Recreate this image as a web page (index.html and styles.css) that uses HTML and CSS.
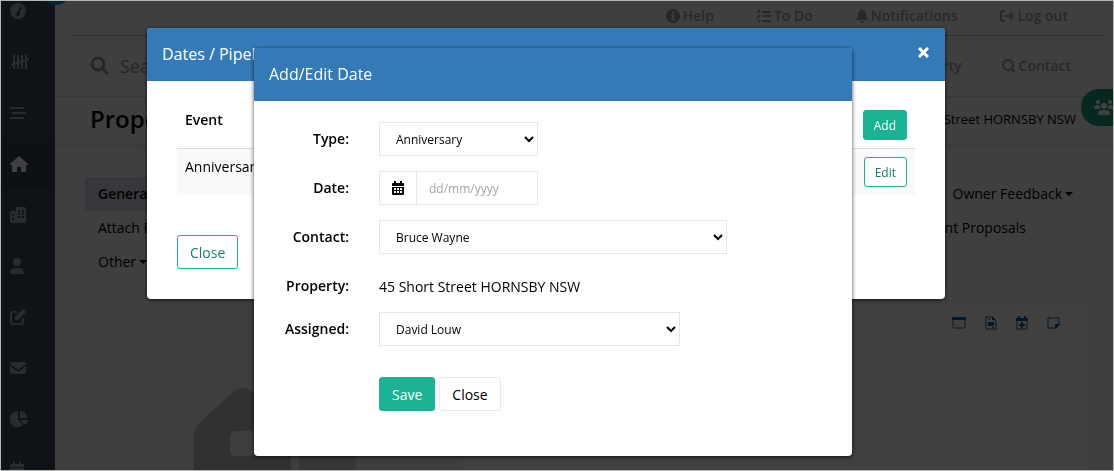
FILE: index.html
```
<!DOCTYPE html>
<html lang="en">
  <head>
    <meta charset="UTF-8" />
    <meta name="viewport" content="width=device-width, initial-scale=1.0" />
    <title>Property</title>
    <link rel="stylesheet" href="styles.css">
  </head>
  <body>
    <div class="page">
      <nav class="sidebar">
        <a href="#" aria-label="Dashboard"><svg width="16" height="16" viewBox="0 0 16 16"><circle cx="8" cy="8" r="8"/><path class="cut-line" d="M8 11l3-7"/><circle class="cut" cx="8" cy="11" r="2"/></svg></a>
        <a href="#" aria-label="Tally"><svg width="20" height="16" viewBox="0 0 20 16"><path class="line" d="M4 1v14M8 1v14M12 1v14M16 1v14M1 11L19 5"/></svg></a>
        <a href="#" aria-label="Lists"><svg width="16" height="14" viewBox="0 0 16 14"><path class="line" d="M0 2h14M2 7h14M0 12h14"/></svg></a>
        <a href="#" class="active" aria-label="Property"><svg width="18" height="16" viewBox="0 0 18 16"><path d="M9 0L0 8v1h2v6q0 1 1 1h4v-5h4v5h4q1 0 1-1V9h2V8z"/></svg></a>
        <a href="#" aria-label="Buildings"><svg width="16" height="16" viewBox="0 0 16 16"><path d="M8 0h6q2 0 2 2v12q0 2-2 2H2q-2 0-2-2V6q0-2 2-2h4V2q0-2 2-2z"/><path class="cut" d="M8 3h2v2H8zM12 3h2v2h-2zM8 6h2v2H8zM12 6h2v2h-2zM8 9h2v2H8zM12 9h2v2h-2zM2 7h2v2H2zM2 11h2v2H2z"/></svg></a>
        <a href="#" aria-label="People"><svg width="14" height="16" viewBox="0 0 14 16"><circle cx="7" cy="4" r="4"/><path d="M0 16q0-6 5-6h4q5 0 5 6z"/></svg></a>
        <a href="#" aria-label="Notes"><svg width="16" height="16" viewBox="0 0 16 16"><path class="line" d="M7 3H3Q1 3 1 5v8q0 2 2 2h8q2 0 2-2V9"/><path d="M5 11V8l6-6 3 3-6 6zM12 1q1-1 2 0l1 1q1 1 0 2l-1 1-3-3z"/></svg></a>
        <a href="#" aria-label="Mail"><svg width="16" height="12" viewBox="0 0 16 12"><path d="M2 0h12q2 0 2 2L8 8 0 2Q0 0 2 0zM0 4l8 6 8-6v6q0 2-2 2H2q-2 0-2-2z"/></svg></a>
        <a href="#" aria-label="Reports"><svg width="18" height="16" viewBox="0 0 18 16"><path d="M8 0v9l5 5A8 8 0 1 1 8 0zM10 0q6 0 7 7h-7zM10 9h8q0 3-3 5z"/></svg></a>
        <a href="#" aria-label="Calendar"><svg width="14" height="16" viewBox="0 0 14 16"><path d="M3 0h2v2h4V0h2v2h1q2 0 2 2v1H0V4q0-2 2-2h1zM0 6h14v8q0 2-2 2H2q-2 0-2-2z"/><path class="cut" d="M2 8h3v2H2zM6 8h2v2H6zM9 8h3v2H9zM2 12h3v2H2zM6 12h2v2H6zM9 12h3v2H9z"/></svg></a>
      </nav>
      <span class="collapse-dot"></span>

      <main class="main">
        <div class="top-links">
          <a href="#"><svg width="14" height="14" viewBox="0 0 14 14"><circle cx="7" cy="7" r="7"/><path class="hole" d="M6 3h2v2H6zM5 6h3v4h1v1H5v-1h1V7H5z"/></svg>Help</a>
          <a href="#"><svg width="14" height="14" viewBox="0 0 14 14"><path class="line" d="M5 3h9M6 7h8M5 12h9M0 2l1 1 2-2M0 7l1 1 2-2M1 12h2"/></svg>To Do</a>
          <a href="#"><svg width="12" height="14" viewBox="0 0 12 14"><path d="M5 0h2v1q3 1 3 4 0 4 2 5v1H0v-1q2-1 2-5 0-3 3-4zM4 12h4q0 2-2 2t-2-2z"/></svg>Notifications</a>
          <a href="#"><svg width="14" height="14" viewBox="0 0 14 14"><path class="line" d="M5 2H3Q1 2 1 4v6q0 2 2 2h2M5 7h8M10 4l3 3-3 3"/></svg>Log out</a>
        </div>

        <div class="search-row">
          <label class="search">
            <svg width="20" height="20" viewBox="0 0 20 20"><circle class="ring" cx="8" cy="8" r="6"/><path class="ring" d="M12 12l6 6"/></svg>
            <input type="text" placeholder="Search" aria-label="Search" />
          </label>
          <div class="search-links">
            <a href="#">Property</a>
            <a href="#"><svg width="14" height="14" viewBox="0 0 14 14"><circle class="line" cx="6" cy="6" r="5"/><path class="line" d="M9 9l4 4"/></svg>Contact</a>
          </div>
        </div>

        <div class="heading">
          <h1>Property</h1>
          <span>45 Short Street HORNSBY NSW</span>
        </div>

        <div class="tabs">
          <div class="tab-row">
            <a href="#" class="selected">General</a>
            <a href="#">Owner Feedback<i class="caret"></i></a>
          </div>
          <div class="tab-row short">
            <a href="#">Attach Files</a>
            <a href="#">Rent Proposals</a>
          </div>
          <div class="tab-row">
            <a href="#">Other<i class="caret"></i></a>
          </div>
        </div>

        <section class="card">
          <div class="photo">
            <svg width="166" height="110" viewBox="0 0 166 110"><path d="M0 110V48q0-7 5-12L40 4q9-7 18 0l35 32q4 5 4 12v62z"/><rect class="window" x="36" y="44" width="26" height="25" rx="6"/><path class="side" d="M105 60h57v50h-57z"/></svg>
          </div>
          <div class="card-tools">
            <a href="#" aria-label="Window"><svg width="14" height="14" viewBox="0 0 14 14"><rect class="thin" x="1" y="2" width="12" height="10" rx="1"/><path d="M0 1h14v3H0z"/></svg></a>
            <a href="#" aria-label="Document"><svg width="12" height="14" viewBox="0 0 12 14"><path class="thin" d="M1 1h6l4 4v8H1z"/><path d="M7 0l4 4H7zM3 6h6v4H3zM3 3h2v1H3zM7 11h2v1H7z"/></svg></a>
            <a href="#" aria-label="Add date"><svg width="12" height="14" viewBox="0 0 12 14"><path class="thin" d="M1 3h10v10H1z"/><path d="M0 2h2V0h2v2h4V0h2v2h2v3H0zM5 6h2v2h2v2H7v2H5v-2H3V8h2z"/></svg></a>
            <a href="#" aria-label="Note"><svg width="13" height="14" viewBox="0 0 13 14"><path class="thin" d="M1 2h11v7l-3 3H1z"/><path d="M8 8h5l-5 5z"/></svg></a>
          </div>
        </section>
      </main>
      <button class="team" aria-label="Team"><svg width="20" height="17" viewBox="0 0 20 17"><circle cx="4" cy="3" r="2"/><circle cx="16" cy="3" r="2"/><circle cx="10" cy="7" r="3"/><path d="M0 10q0-4 4-4l2 1v3zM20 10q0-4-4-4l-2 1v3zM4 16q0-5 4-5h4q4 0 4 5z"/></svg></button>
    </div>

    <div class="overlay dates-overlay">
      <div class="modal dates-modal" role="dialog" aria-label="Dates">
        <div class="modal-header">
          <h2>Dates / Pipeline Tracked Dates</h2>
          <button class="close-x" aria-label="Close"><svg width="11" height="11" viewBox="0 0 11 11"><path d="M1 1l9 9M10 1L1 10"/></svg></button>
        </div>
        <div class="dates-body">
          <table>
            <thead>
              <tr><th>Event</th><th class="action"><button class="btn btn-sm primary">Add</button></th></tr>
            </thead>
            <tbody>
              <tr><td>Anniversary</td><td class="action"><button class="btn btn-sm outline">Edit</button></td></tr>
            </tbody>
          </table>
          <button class="btn outline">Close</button>
        </div>
      </div>
    </div>

    <div class="overlay edit-overlay">
      <div class="modal edit-modal" role="dialog" aria-label="Add/Edit Date">
        <div class="modal-header">
          <h2>Add/Edit Date</h2>
        </div>
        <form class="edit-form">
          <label for="type">Type:</label>
          <select id="type" class="small">
            <option>Anniversary</option>
          </select>

          <label for="date">Date:</label>
          <div class="date-group small">
            <span class="addon"><svg width="12" height="14" viewBox="0 0 12 14"><path d="M2 0h2v2h4V0h2v2h1q1 0 1 1v2H0V3q0-1 1-1h1zM0 6h12v7q0 1-1 1H1q-1 0-1-1z"/><path class="hole" d="M2 7h2v2H2zM5 7h2v2H5zM8 7h2v2H8zM2 10h2v2H2zM5 10h2v2H5zM8 10h2v2H8z"/></svg></span>
            <input type="text" id="date" placeholder="dd/mm/yyyy" />
          </div>

          <label for="contact">Contact:</label>
          <select id="contact" class="large">
            <option>Bruce Wayne</option>
          </select>

          <label for="property">Property:</label>
          <output id="property">45 Short Street HORNSBY NSW</output>

          <label for="assigned">Assigned:</label>
          <select id="assigned" class="medium">
            <option>David Louw</option>
          </select>

          <div class="form-buttons">
            <button type="button" class="btn primary">Save</button>
            <button type="button" class="btn plain">Close</button>
          </div>
        </form>
      </div>
    </div>
    <div class="frame"></div>
  </body>
</html>
```
FILE: styles.css
```
* {
  box-sizing: border-box;
}

body {
  margin: 0;
  height: 100vh;
  overflow: hidden;
  font-family: "Open Sans", sans-serif;
  font-size: 14px;
  line-height: 20px;
  color: #000;
}

a {
  color: inherit;
  text-decoration: none;
}

svg {
  display: block;
  flex: none;
  fill: currentColor;
}

.line,
.thin,
.ring {
  fill: none;
  stroke: currentColor;
  stroke-width: 2;
}

.ring {
  stroke-width: 3;
}

.page {
  display: flex;
  height: 100vh;
  overflow: hidden;
  position: relative;
  background-color: #fafafa;
}

.sidebar {
  width: 55px;
  flex: none;
  margin-top: -15px;
  background-color: #3c4a5a;
  color: #a7abb8;
}

.sidebar a {
  display: flex;
  align-items: center;
  height: 51px;
  padding-left: 10px;
}

.sidebar .active {
  background-color: #35414f;
  color: #fff;
}

.sidebar .cut {
  fill: #3c4a5a;
}

.sidebar .cut-line {
  stroke: #3c4a5a;
  stroke-width: 2;
}

.collapse-dot {
  position: absolute;
  left: 42px;
  top: -23px;
  width: 28px;
  height: 28px;
  border-radius: 50%;
  background-color: #0a94d6;
}

.main {
  flex: 1;
  min-width: 0;
}

.top-links,
.search-links {
  display: flex;
  gap: 43px;
  font-weight: 600;
  color: #a0a0ac;
}

.search-links {
  gap: 40px;
}

.top-links {
  justify-content: flex-end;
  height: 36px;
  margin: 0 9px 0 15px;
  padding: 6px 37px 0 0;
  border-bottom: 1px solid #bbb;
}

.top-links a,
.search-links a {
  display: flex;
  align-items: center;
  gap: 3px;
  height: 20px;
}

.hole {
  fill: #fafafa;
}

.search-row {
  display: flex;
  justify-content: space-between;
  align-items: center;
  height: 61px;
  padding: 0 43px 0 35px;
  border-bottom: 1px solid #ddd;
}

.search {
  display: flex;
  align-items: center;
  gap: 10px;
  color: #999;
}

.search input {
  border: 0;
  padding: 0;
  background: none;
  font: 18px "Open Sans", sans-serif;
}

.search input::placeholder {
  color: #999;
}

.heading {
  display: flex;
  justify-content: space-between;
  align-items: center;
  height: 50px;
  padding: 0 38px 4px 35px;
  border-bottom: 3px double #e0e0e0;
  font-size: 13px;
}

h1 {
  margin: 0;
  font-size: 24px;
  line-height: 32px;
  font-weight: 600;
}

.tabs {
  padding: 30px 28px 0 30px;
}

.tab-row {
  display: flex;
  justify-content: space-between;
}

.tab-row.short {
  padding-right: 47px;
}

.tab-row a {
  display: flex;
  align-items: center;
  height: 34px;
  padding: 0 13px;
}

.tab-row .selected {
  background-color: #dcdfee;
  border-radius: 4px;
  font-weight: 600;
}

.caret {
  margin-left: 3px;
  border: 4px solid transparent;
  border-top-color: #000;
  border-bottom: 0;
}

.card {
  display: flex;
  justify-content: space-between;
  height: 300px;
  margin: 21px 24px 0 30px;
  border: 1px solid #eee;
  border-radius: 8px;
  background-color: #fff;
  overflow: hidden;
}

.photo {
  flex: 0 1 376px;
  padding: 86px 0 0 108px;
  background-color: #f8f8fb;
  color: #c2c4cf;
}

.photo .window {
  fill: #f8f8fb;
}

.photo .side {
  fill: #dcdce0;
}

.card-tools {
  display: flex;
  gap: 19px;
  padding: 15px 29px;
  color: #1a5796;
}

.card-tools .thin {
  stroke-width: 1;
}

.team {
  position: absolute;
  right: 0;
  top: 89px;
  width: 33px;
  height: 37px;
  padding: 0 0 0 13px;
  border: 0;
  border-radius: 18px 0 0 18px;
  background-color: #11a385;
  color: #fff;
  overflow: hidden;
}

/* modals */
.overlay {
  position: fixed;
  inset: 0;
  display: flex;
  justify-content: center;
  align-items: flex-start;
}

.dates-overlay {
  padding: 28px 22px 0 0;
  background-color: rgba(0, 0, 0, 0.75);
}

.edit-overlay {
  padding: 48px 8px 0 0;
}

.modal {
  width: 100%;
  border-radius: 4px;
  background-color: #fff;
  box-shadow: 0 1px 4px rgba(0, 0, 0, 0.7);
}

.dates-modal {
  max-width: 798px;
}

.edit-modal {
  max-width: 598px;
}

.modal-header {
  display: flex;
  justify-content: space-between;
  align-items: center;
  height: 53px;
  padding: 0 15px 2px;
  border-radius: 3px 3px 0 0;
  background-color: #337ab7;
  color: #fff;
}

h2 {
  margin: 0;
  font-size: 16px;
  line-height: 24px;
  font-weight: 400;
}

.close-x {
  padding: 0 1px 2px;
  border: 0;
  background: none;
  color: #fff;
}

.close-x path {
  stroke: currentColor;
  stroke-width: 3;
}

.dates-body {
  padding: 21px 30px 30px;
}

table {
  width: 100%;
  margin-bottom: 40px;
  border-collapse: collapse;
}

th,
td {
  padding: 8px;
  text-align: left;
  vertical-align: top;
}

th {
  font-weight: 600;
  border-bottom: 1px solid #ddd;
}

td {
  background-color: #f9f9f9;
}

.action {
  text-align: right;
}

.btn {
  height: 34px;
  padding: 0 12px;
  border: 1px solid #1ab394;
  border-radius: 3px;
  background-color: #fff;
  font: 14px "Open Sans", sans-serif;
}

.btn-sm {
  display: inline-block;
  height: 30px;
  padding: 0 10px;
  font-size: 12px;
  vertical-align: top;
}

.primary {
  background-color: #1ab394;
  color: #fff;
}

.outline {
  color: #1a7b72;
}

.plain {
  border-color: #e7eaec;
}

.edit-form {
  display: grid;
  grid-template-columns: 80px 1fr;
  gap: 15px 30px;
  padding: 21px 15px 45px;
}

.edit-form label {
  padding-top: 7px;
  text-align: right;
  font-weight: 600;
  white-space: nowrap;
}

.edit-form select,
.date-group {
  height: 34px;
  max-width: 100%;
  border: 1px solid #e5e6e7;
  background-color: #fff;
}

.edit-form select {
  padding: 6px 0 6px 12px;
  border-radius: 0;
  font: 12px "Open Sans", sans-serif;
  color: #000;
}

.small {
  width: 159px;
}

.medium {
  width: 301px;
}

.large {
  width: 348px;
}

.date-group {
  display: flex;
}

.addon {
  display: flex;
  align-items: center;
  padding: 0 12px;
  border-right: 1px solid #e5e6e7;
}

.date-group input {
  flex: 1;
  min-width: 0;
  padding: 0 12px;
  border: 0;
  font: 12px "Open Sans", sans-serif;
}

.date-group input::placeholder {
  color: #a5a5a5;
}

.edit-form output {
  padding-top: 8px;
}

.form-buttons {
  display: flex;
  gap: 4px;
  grid-column: 2;
  margin-top: 16px;
}

.frame {
  position: fixed;
  inset: 0;
  border: 1px solid #b4b6b4;
  pointer-events: none;
}
```
